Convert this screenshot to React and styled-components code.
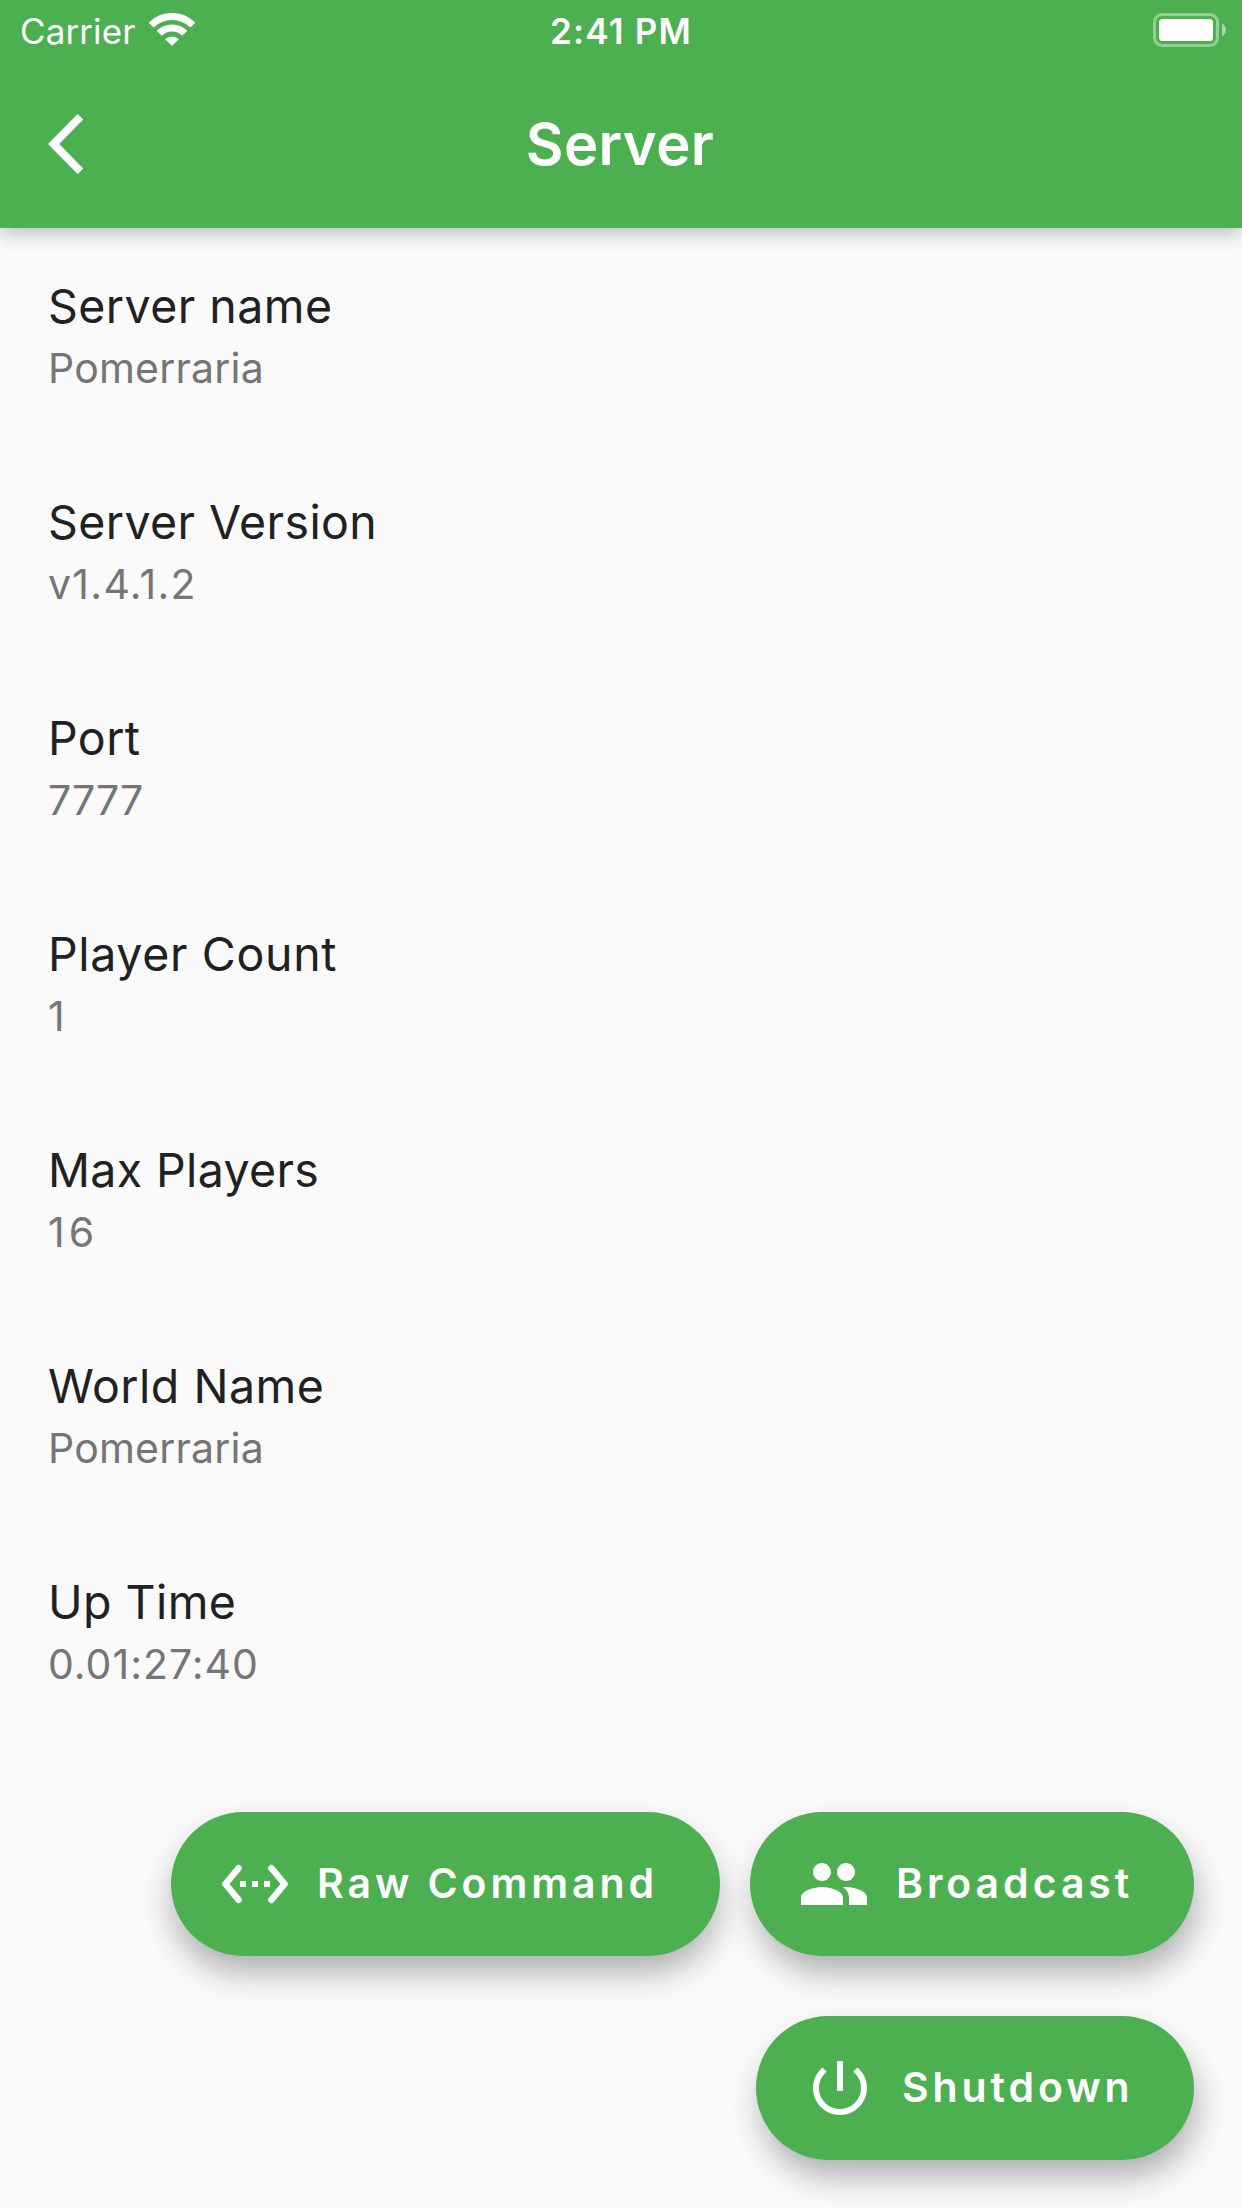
import React from 'react';
import styled, { createGlobalStyle } from 'styled-components';

const Global = createGlobalStyle`
  * { box-sizing: border-box; }
  body { margin: 0; background: #fafafa; font-family: Inter, "Noto Sans", sans-serif; }
`;

const Screen = styled.div`
  width: 1242px;
  height: 2208px;
  display: flex;
  flex-direction: column;
  background: #fafafa;
  overflow: hidden;
`;

const Header = styled.header`
  flex: none;
  height: 228px;
  background: #4caf50;
  color: #fff;
  box-shadow: 0 6px 18px rgba(0, 0, 0, 0.24);
`;

const Status = styled.div`
  height: 60px;
  display: grid;
  grid-template-columns: 1fr auto 1fr;
  align-items: start;
  padding: 0 15px 0 20px;
  font-size: 35px;
  line-height: 62px;
`;

const Carrier = styled.div`
  display: flex;
  align-items: flex-start;
  gap: 14px;
  letter-spacing: 0.1px;
`;

const Clock = styled.div`
  font-weight: 600;
  letter-spacing: 1.2px;
  padding-right: 5px;
`;

const Wifi = styled.svg`
  display: block;
  width: 46px;
  height: 33px;
  margin-top: 13px;
`;

const Battery = styled.svg`
  display: block;
  width: 74px;
  height: 34px;
  margin-top: 13px;
  justify-self: end;
`;

const Bar = styled.div`
  height: 168px;
  display: grid;
  grid-template-columns: 1fr auto 1fr;
  align-items: center;
  padding: 0 48px;
`;

const Back = styled.button`
  display: flex;
  width: 72px;
  height: 72px;
  padding: 0;
  border: 0;
  background: none;
  color: inherit;
`;

const Title = styled.h1`
  margin: 0;
  padding-right: 2px;
  font-size: 58px;
  font-weight: 600;
  line-height: 168px;
  letter-spacing: 0.35px;
`;

const List = styled.main`
  flex: none;
  display: flex;
  flex-direction: column;
`;

const Row = styled.section`
  height: 216px;
  padding: 50px 48px 0;
`;

const Label = styled.div`
  font-size: 46.5px;
  line-height: 56px;
  color: #212121;
  letter-spacing: ${(p) => p.$tracking}px;
`;

const Value = styled.div`
  margin-top: 9px;
  font-size: 41px;
  line-height: 50px;
  color: #757575;
  letter-spacing: ${(p) => p.$tracking}px;
`;

const Actions = styled.footer`
  display: flex;
  flex-wrap: wrap;
  justify-content: flex-end;
  gap: 60px 30px;
  padding: 72px 48px 0;
`;

const Pill = styled.button`
  width: ${(p) => p.$width}px;
  height: 144px;
  display: flex;
  align-items: center;
  gap: 26px;
  padding: 0 0 0 48px;
  border: 0;
  border-radius: 72px;
  background: #4caf50;
  color: #fff;
  font: 600 41px/50px Inter, "Noto Sans", sans-serif;
  letter-spacing: ${(p) => p.$tracking}px;
  white-space: nowrap;
  box-shadow: ${(p) => p.$shift}px 18px 33px -2px rgba(0, 0, 0, 0.31);
`;

const PillText = styled.span`
  padding-bottom: 2px;
`;

const Icon = styled.svg`
  display: block;
  flex: none;
  width: 72px;
  height: 72px;
  overflow: visible;
`;

const rows = [
  { label: 'Server name', lt: 0.45, value: 'Pomerraria', vt: 0.2 },
  { label: 'Server Version', lt: 0.4, value: 'v1.4.1.2', vt: 1.3 },
  { label: 'Port', lt: 0.4, value: '7777', vt: 0 },
  { label: 'Player Count', lt: 0.65, value: '1', vt: 0 },
  { label: 'Max Players', lt: 0.35, value: '16', vt: 4 },
  { label: 'World Name', lt: 0.5, value: 'Pomerraria', vt: 0.2 },
  { label: 'Up Time', lt: 0.45, value: '0.01:27:40', vt: 1 },
];

const EthernetIcon = () => (
  <Icon viewBox="0 0 24 24" fill="none" stroke="currentColor" strokeWidth="2.15" strokeLinecap="round" strokeLinejoin="round">
    <path d="M6.55 6.7 2.12 12l4.43 5.3M17.45 6.7 21.88 12l-4.43 5.3" />
    <path d="M7 11h2v2H7zM11 11h2v2h-2zM15 11h2v2h-2z" fill="currentColor" stroke="none" />
  </Icon>
);

const PeopleIcon = () => (
  <Icon viewBox="0 0 24 24" fill="currentColor">
    <path d="M16 11c1.66 0 2.99-1.34 2.99-3S17.66 5 16 5s-3 1.34-3 3 1.34 3 3 3zm-8 0c1.66 0 2.99-1.34 2.99-3S9.66 5 8 5 5 6.34 5 8s1.34 3 3 3zm0 2c-2.33 0-7 1.17-7 3.5V19h14v-2.5c0-2.33-4.67-3.5-7-3.5zm8 0c-.29 0-.62.02-.97.05 1.16.84 1.97 1.97 1.97 3.45V19h6v-2.5c0-2.33-4.67-3.5-7-3.5z" />
  </Icon>
);

const PowerIcon = () => (
  <Icon viewBox="0 0 24 24" fill="currentColor">
    <path d="M13 3h-2v10h2V3zm4.83 2.17-1.42 1.42C17.99 7.86 19 9.81 19 12c0 3.87-3.13 7-7 7s-7-3.13-7-7c0-2.19 1.01-4.14 2.58-5.42L6.17 5.17C4.23 6.82 3 9.26 3 12c0 4.97 4.03 9 9 9s9-4.03 9-9c0-2.74-1.23-5.18-3.17-6.83z" />
  </Icon>
);

const actions = [
  { text: 'Raw Command', width: 549, tracking: 3.9, shift: 0, Glyph: EthernetIcon },
  { text: 'Broadcast', width: 444, tracking: 3.95, shift: 4, Glyph: PeopleIcon },
  { text: 'Shutdown', width: 438, tracking: 3.9, shift: 4, Glyph: PowerIcon },
];

export default function App() {
  return (
    <>
      <Global />
      <Screen>
        <Header>
          <Status>
            <Carrier>
              <span>Carrier</span>
              <Wifi viewBox="0 0 46 33" fill="none" stroke="#fff">
                <path d="M2.14 12.14a29.5 29.5 0 0 1 41.72 0" strokeWidth="7" />
                <path d="M10.27 20.27a18 18 0 0 1 25.46 0" strokeWidth="7.2" />
                <path d="M23 33l-6.8-6.8a9.6 9.6 0 0 1 13.6 0z" fill="#fff" stroke="none" />
              </Wifi>
            </Carrier>
            <Clock>2:41 PM</Clock>
            <Battery viewBox="0 0 74 34">
              <rect x="1.5" y="1.5" width="63" height="31" rx="7.5" fill="none" stroke="#fff" strokeOpacity=".4" strokeWidth="3" />
              <rect x="6" y="6" width="54" height="22" rx="3.5" fill="#fff" />
              <path d="M69 10.5c2.6 1.4 4 3.8 4 6.5s-1.4 5.1-4 6.5z" fill="#fff" fillOpacity=".5" />
            </Battery>
          </Status>
          <Bar>
            <Back aria-label="Back">
              <Icon viewBox="0 0 24 24" fill="currentColor">
                <path d="M11.75 3.87 9.9 2.02 0 12l9.9 9.98 1.85-1.85L3.72 12z" />
              </Icon>
            </Back>
            <Title>Server</Title>
          </Bar>
        </Header>
        <List>
          {rows.map((r) => (
            <Row key={r.label}>
              <Label $tracking={r.lt}>{r.label}</Label>
              <Value $tracking={r.vt}>{r.value}</Value>
            </Row>
          ))}
        </List>
        <Actions>
          {actions.map(({ text, width, tracking, shift, Glyph }) => (
            <Pill key={text} $width={width} $tracking={tracking} $shift={shift}>
              <Glyph />
              <PillText>{text}</PillText>
            </Pill>
          ))}
        </Actions>
      </Screen>
    </>
  );
}
